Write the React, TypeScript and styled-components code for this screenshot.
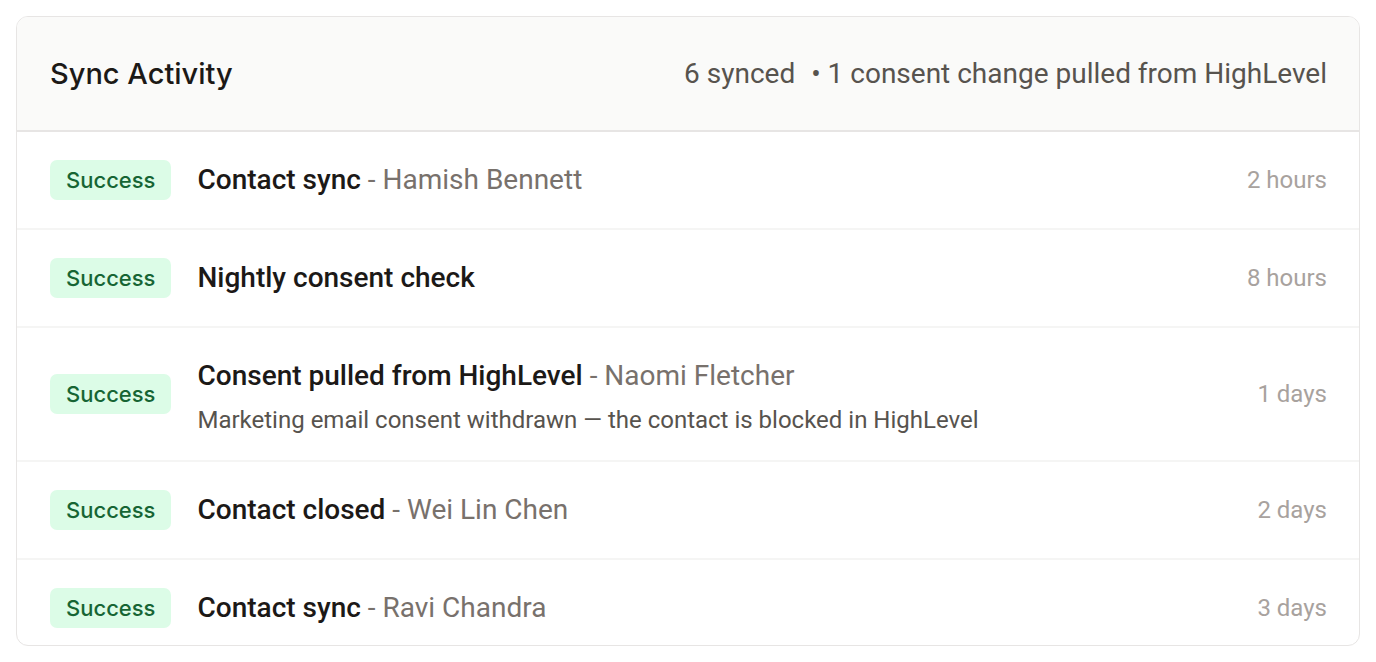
import React from "react";
import styled, { createGlobalStyle } from "styled-components";

const GlobalStyle = createGlobalStyle`
  html, body {
    margin: 0;
    padding: 0;
    background: #ffffff;
  }
  body {
    padding: 16px;
    box-sizing: border-box;
    font-family: Roboto, "Noto Sans", sans-serif;
  }
  * { box-sizing: border-box; }
`;

const Card = styled.section`
  height: calc(100vh - 32px);
  border: 1px solid #e7e5e4;
  border-radius: 12px;
  overflow: hidden;
  background: #ffffff;
  display: flex;
  flex-direction: column;
`;

const Header = styled.header`
  display: flex;
  align-items: center;
  justify-content: space-between;
  height: 115px;
  flex-shrink: 0;
  padding: 0 32px 0 33px;
  background: #fafaf9;
  border-bottom: 2px solid #e7e5e4;
`;

const Title = styled.h2`
  margin: 0;
  font-family: Inter, "Liberation Sans", sans-serif;
  font-size: 29px;
  font-weight: 500;
  color: #1c1917;
`;

const Summary = styled.div`
  display: flex;
  gap: 16px;
  font-size: 28px;
  color: #57534e;
`;

const List = styled.ul`
  list-style: none;
  margin: 0;
  padding: 0;
`;

const Row = styled.li`
  display: flex;
  align-items: center;
  gap: 26px;
  padding: 28px 32px 28px 33px;
  border-bottom: 2px solid #f5f5f4;
`;

const Badge = styled.span`
  flex-shrink: 0;
  display: inline-flex;
  align-items: center;
  justify-content: center;
  height: 40px;
  padding: 0 16px;
  border-radius: 7px;
  background: #dcfce7;
  color: #166534;
  font-family: Inter, "Liberation Sans", sans-serif;
  font-size: 22px;
  font-weight: 500;
`;

const Body = styled.div`
  flex: 1;
  display: flex;
  flex-direction: column;
  gap: 12px;
  min-width: 0;
`;

const Line = styled.div`
  font-size: 28px;
  line-height: 40px;
  color: #1c1917;
`;

const Event = styled.span`
  font-weight: 500;
`;

const Person = styled.span`
  color: #78716c;
`;

const Detail = styled.div`
  font-size: 24px;
  line-height: 24px;
  color: #57534e;
`;

const When = styled.span`
  flex-shrink: 0;
  font-size: 24px;
  color: #a8a29e;
`;

type Activity = {
  event: string;
  person?: string;
  detail?: string;
  when: string;
};

const activities: Activity[] = [
  { event: "Contact sync", person: "Hamish Bennett", when: "2 hours" },
  { event: "Nightly consent check", when: "8 hours" },
  {
    event: "Consent pulled from HighLevel",
    person: "Naomi Fletcher",
    detail: "Marketing email consent withdrawn — the contact is blocked in HighLevel",
    when: "1 days",
  },
  { event: "Contact closed", person: "Wei Lin Chen", when: "2 days" },
  { event: "Contact sync", person: "Ravi Chandra", when: "3 days" },
];

export default function App() {
  return (
    <>
      <GlobalStyle />
      <Card>
        <Header>
          <Title>Sync Activity</Title>
          <Summary>
            <span>6 synced</span>
            <span>• 1 consent change pulled from HighLevel</span>
          </Summary>
        </Header>
        <List>
          {activities.map((a, i) => (
            <Row key={i}>
              <Badge>Success</Badge>
              <Body>
                <Line>
                  <Event>{a.event}</Event>
                  {a.person && <Person> - {a.person}</Person>}
                </Line>
                {a.detail && <Detail>{a.detail}</Detail>}
              </Body>
              <When>{a.when}</When>
            </Row>
          ))}
        </List>
      </Card>
    </>
  );
}
